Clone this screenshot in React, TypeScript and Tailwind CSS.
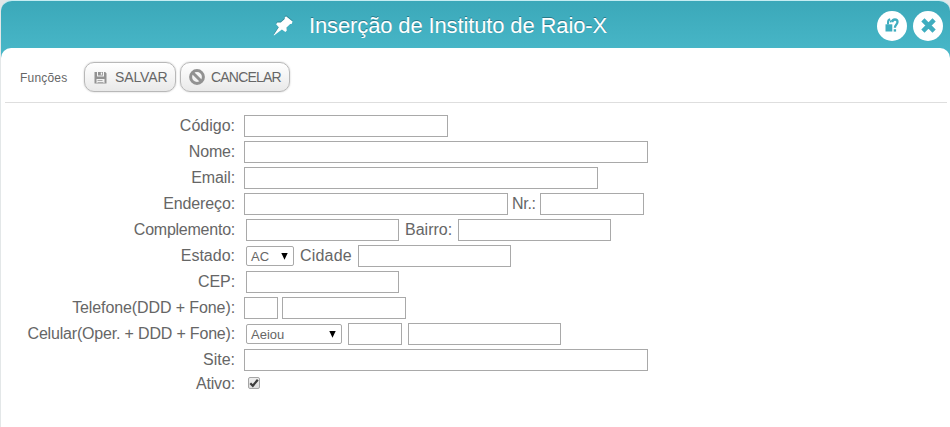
import type { ReactNode } from 'react';
import { clsx } from 'clsx';

type RowProps = {
  label: string;
  children: ReactNode;
  className?: string;
  labelClass?: string;
};

function PinIcon() {
  return (
    <svg viewBox="0 0 20 20" className="h-5 w-5 drop-shadow-[0_-1px_0_#2b8494]" fill="#fff">
      <path d="M13 .2 19.600 5.600 18.600 7.900 17.200 7.900 13.500 11.600 13.800 14.600 12.400 16 8.900 13.400 1 19.400.7 18.900 5.800 11.200 3.100 8.200 4.300 6.400 7.800 6.400 11.700 3 11.700 1.500Z" />
    </svg>
  );
}

function SaveIcon() {
  return (
    <svg viewBox="0 0 13 13" className="h-[13px] w-[13px]" fill="#929292">
      <path
        fillRule="evenodd"
        d="M.5 1H3v4.500h7V1h1.200L12.500 2.300V12.500H.5ZM2.500 8v4h8V8ZM4 1h5v3.500H4ZM6.800 1.500v2.300h1.400V1.500Z"
      />
      <path d="M3.500 9.200h5v.8h-5ZM3.500 10.900h6v.8h-6Z" />
    </svg>
  );
}

function CancelIcon() {
  return (
    <svg viewBox="0 0 16 16" className="h-4 w-4" fill="none" stroke="#929292" strokeWidth="3">
      <circle cx="8" cy="8" r="6.400" />
      <path d="m3.700 3.700 8.600 8.600" />
    </svg>
  );
}

function HelpIcon() {
  return (
    <svg viewBox="0 0 14 15" className="h-[15px] w-[14px]" fill="none" stroke="#3fadbf">
      <path d="M.5 6.300h6.800v7.200H.5Z" fill="#3fadbf" stroke="none" />
      <path d="M3 6.500V4.300C3 2.600 3.700 1.500 5.200 1.200" strokeWidth="2" />
      <path d="M5.200 4.600C5.200 3.500 5.700 2.700 6.700 2.300" strokeWidth="1.200" />
      <path d="M7.300 4.300C7.300 2.500 8.300 1.500 9.900 1.500S12.500 2.500 12.500 4.100C12.500 6.500 9.900 6.500 9.900 9.800" strokeWidth="2.300" />
      <path d="M8.700 11.200h2.400v2.400H8.700Z" fill="#3fadbf" stroke="none" />
    </svg>
  );
}

function CloseIcon() {
  return (
    <svg viewBox="0 0 15 15" className="h-[15px] w-[15px]" fill="none" stroke="#3fadbf" strokeWidth="4.600">
      <path d="m1.900 1.900 11.200 11.200M13.100 1.900 1.900 13.100" />
    </svg>
  );
}

function Row({ label, children, className, labelClass }: RowProps) {
  return (
    <div className={clsx('flex items-center', className ?? 'h-[26px]')}>
      <div className={clsx('mr-[9px] w-[234px] shrink-0 whitespace-nowrap text-right', labelClass)}>{label}</div>
      {children}
    </div>
  );
}

function Field({ className }: { className: string }) {
  return <input type="text" className={clsx('h-[22px] shrink-0 border border-[#a9a9a9] bg-white px-1 text-[13px] outline-none', className)} />;
}

function Select({ value, className }: { value: string; className: string }) {
  return (
    <button
      type="button"
      className={clsx(
        'flex h-5 shrink-0 items-center justify-between rounded-[2px] border border-[#a9a9a9] bg-white pl-1 pr-[5px] text-[13px] leading-none',
        className,
      )}
    >
      <span>{value}</span>
      <svg viewBox="0 0 7 7" className="h-[7px] w-[7px]" fill="#000">
        <path d="M.3 0h6.400L3.500 6.700Z" />
      </svg>
    </button>
  );
}

function ToolButton({ icon, children, className }: { icon: ReactNode; children: ReactNode; className: string }) {
  return (
    <button
      type="button"
      className={clsx(
        'flex h-[30px] items-center whitespace-nowrap rounded-[10px] border border-[#b8b8b8] bg-linear-to-b from-white to-[#e9e9e9] text-[14px] shadow-[0_0_2px_#c4c4c4]',
        className,
      )}
    >
      {icon}
      {children}
    </button>
  );
}

export default function App() {
  return (
    <div className="h-[427px] w-[950px] overflow-hidden bg-[#e3e7e8] pl-px font-['Liberation_Sans',Arial,sans-serif] text-[#666]">
      <div className="h-full rounded-t-[11px] border-t border-[#c5edf2] bg-linear-to-b from-[#3ba8b9] to-[#49b8c9] to-[56px]">
        <header className="flex h-[47px] items-center">
          <div className="ml-[272px] flex items-center pt-[2px]">
            <PinIcon />
            <h1 className="ml-4 whitespace-nowrap text-[22px] leading-6 tracking-[-0.13px] text-white [text-shadow:0_-1px_0_#287b8b]">
              Inserção de Instituto de Raio-X
            </h1>
          </div>
          <div className="ml-auto mr-[7px] flex gap-[6px] pt-[2px]">
            <button type="button" aria-label="Ajuda" className="flex h-[30px] w-[30px] items-center justify-center rounded-full bg-white">
              <HelpIcon />
            </button>
            <button type="button" aria-label="Fechar" className="flex h-[30px] w-[30px] items-center justify-center rounded-full bg-white">
              <CloseIcon />
            </button>
          </div>
        </header>

        <main className="h-[379px] rounded-t-[10px] bg-white">
          <div className="ml-1 mr-[3px] flex h-[55px] items-center border-b border-[#dedede] pl-[15px] pt-[4px]">
            <span className="w-[64px] pt-px text-[12px] tracking-[0.2px]">Funções</span>
            <ToolButton icon={<SaveIcon />} className="w-[92px] gap-[8px] pl-[9px] tracking-[-0.1px]">
              SALVAR
            </ToolButton>
            <ToolButton icon={<CancelIcon />} className="ml-1 w-[110px] gap-[6px] pl-2 tracking-[-0.8px]">
              CANCELAR
            </ToolButton>
          </div>

          <form className="pt-[10px] text-[16px] leading-[22px]">
            <Row label="Código:">
              <Field className="w-[204px]" />
            </Row>
            <Row label="Nome:" labelClass="tracking-[-0.2px]">
              <Field className="w-[404px]" />
            </Row>
            <Row label="Email:" labelClass="tracking-[-0.1px]">
              <Field className="w-[354px]" />
            </Row>
            <Row label="Endereço:" labelClass="tracking-[-0.12px]">
              <Field className="w-[264px]" />
              <span className="ml-1 w-7 tracking-[-0.3px]">Nr.:</span>
              <Field className="w-[104px]" />
            </Row>
            <Row label="Complemento:" labelClass="tracking-[-0.24px]">
              <Field className="ml-[2px] w-[153px]" />
              <span className="ml-[6px] w-[53px]">Bairro:</span>
              <Field className="w-[153px]" />
            </Row>
            <Row label="Estado:">
              <Select value="AC" className="ml-[2px] w-12" />
              <span className="ml-[6px] w-[58px] tracking-[0.2px]">Cidade</span>
              <Field className="w-[153px]" />
            </Row>
            <Row label="CEP:" labelClass="tracking-[-0.1px]">
              <Field className="ml-[2px] w-[153px]" />
            </Row>
            <Row label="Telefone(DDD + Fone):" labelClass="tracking-[-0.1px]">
              <Field className="w-[34px]" />
              <Field className="ml-1 w-[124px]" />
            </Row>
            <Row label="Celular(Oper. + DDD + Fone):" labelClass="tracking-[-0.18px]">
              <Select value="Aeiou" className="ml-[2px] w-24" />
              <Field className="ml-[6px] w-[54px]" />
              <Field className="ml-[6px] w-[153px]" />
            </Row>
            <Row label="Site:">
              <Field className="w-[404px]" />
            </Row>
            <Row label="Ativo:" className="h-[22px]" labelClass="tracking-[-0.15px]">
              <span
                role="checkbox"
                aria-checked="true"
                className="mb-[3px] ml-1 flex h-3 w-3 items-center justify-center rounded-[2px] border border-[#a5a5a5] bg-linear-to-b from-[#eee] to-[#ddd]"
              >
                <svg viewBox="0 0 10 10" className="h-[10px] w-[10px] shrink-0" fill="none" stroke="#3c3c3c" strokeWidth="2.200">
                  <path d="m1.300 5.200 2.500 2.600L8.800 1.700" />
                </svg>
              </span>
            </Row>
          </form>
        </main>
      </div>
    </div>
  );
}
